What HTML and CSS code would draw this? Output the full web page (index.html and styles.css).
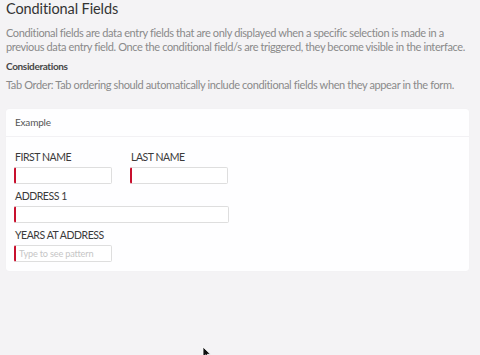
FILE: index.html
```html
<!DOCTYPE html>
<html>
<head>
<meta charset="utf-8">
<link rel="stylesheet" href="styles.css">
</head>
<body>
<div class="page">
  <h1 class="title">Conditional Fields</h1>
  <p class="desc">Conditional fields are data entry fields that are only displayed when a specific selection is made in a previous data entry field. Once the conditional field/s are triggered, they become visible in the interface.</p>
  <h2 class="subhead">Considerations</h2>
  <p class="desc desc-tight">Tab Order: Tab ordering should automatically include conditional fields when they appear in the form.</p>
  <div class="card">
    <div class="card-header">Example</div>
    <div class="card-body">
      <div class="row">
        <div class="field">
          <label class="label">FIRST NAME</label>
          <div class="input small"></div>
        </div>
        <div class="field">
          <label class="label">LAST NAME</label>
          <div class="input small"></div>
        </div>
      </div>
      <div class="field">
        <label class="label">ADDRESS 1</label>
        <div class="input wide"></div>
      </div>
      <div class="field">
        <label class="label">YEARS AT ADDRESS</label>
        <div class="input small"><span class="placeholder">Type to see pattern</span></div>
      </div>
    </div>
  </div>
</div>
<svg class="cursor" width="12" height="14" viewBox="0 0 12 14"><path d="M1 1 L1 11 L3.5 8.8 L5.5 13 L7 12.3 L5.2 8.3 L8.5 8.3 Z" fill="#111" stroke="#fff" stroke-width="0.8"/></svg>
</body>
</html>
```
FILE: styles.css
```css
html, body { margin: 0; padding: 0; }
body {
  background: #f4f3f5;
  font-family: Lato, "Open Sans", sans-serif;
  color: #333;
  width: 480px;
  height: 355px;
  overflow: hidden;
  position: relative;
}
.page { padding: 0 6px; }
.title {
  margin: 0;
  font-size: 14.5px;
  font-weight: 400;
  line-height: 18px;
  color: #333;
  letter-spacing: -0.1px;
}
.desc {
  margin: 8px 0 0;
  font-size: 11px;
  line-height: 13.5px;
  color: #8a8a8a;
  letter-spacing: -0.37px;
}
.desc-tight { margin-top: 6px; }
.subhead {
  margin: 7px 0 0;
  font-size: 10px;
  font-weight: 700;
  line-height: 12px;
  color: #474747;
  letter-spacing: -0.35px;
}
.card {
  margin-top: 17px;
  background: #fefeff;
  border-radius: 3px;
  width: 463px;
  box-shadow: 0 0 1px rgba(0,0,0,0.05);
}
.card-header {
  padding: 0 9px;
  height: 27px;
  line-height: 27px;
  font-size: 10px;
  color: #555;
  letter-spacing: -0.2px;
  border-bottom: 1px solid #f2f1f4;
}
.card-body {
  padding: 14px 8px 9px;
  display: flex;
  flex-direction: column;
  gap: 6px;
}
.row { display: flex; gap: 18px; }
.field { display: flex; flex-direction: column; gap: 4px; }
.label {
  font-size: 10.5px;
  line-height: 12px;
  color: #3a3a3a;
  padding-left: 1px;
  letter-spacing: -0.45px;
}
.input {
  box-sizing: border-box;
  height: 17px;
  border: 1px solid #dedede;
  border-left: 2px solid #c8102e;
  border-radius: 2px;
  background: #fff;
  display: flex;
  align-items: center;
  padding-left: 3px;
}
.small { width: 98px; }
.wide { width: 215px; }
.placeholder { font-size: 9.2px; color: #c6c6c6; letter-spacing: -0.2px; }
.cursor { position: absolute; left: 202px; top: 346px; }
```
